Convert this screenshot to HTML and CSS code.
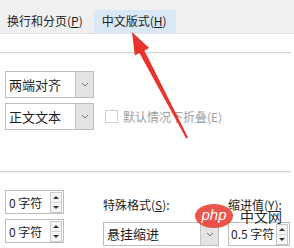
FILE: index.html
```html
<!DOCTYPE html>
<html lang="zh-CN">
<head>
    <meta charset="UTF-8">
    <title>段落</title>
    <link rel="stylesheet" href="styles.css">
</head>
<body>
<div id="wrap">
    <div class="tabs">
        <div class="tab">换行和分页(<u>P</u>)</div>
        <div class="tab active">中文版式(<u>H</u>)</div>
    </div>
    <div class="rule first"></div>

    <div class="general">
        <div class="select w89">
            <span class="val">两端对齐</span>
            <span class="drop"><svg width="8" height="5" viewBox="0 0 8 5"><path d="M1 1 L4 4 L7 1" fill="none" stroke="#777" stroke-width="1"/></svg></span>
        </div>
        <div class="row">
            <div class="select w89">
                <span class="val">正文文本</span>
                <span class="drop"><svg width="8" height="5" viewBox="0 0 8 5"><path d="M1 1 L4 4 L7 1" fill="none" stroke="#777" stroke-width="1"/></svg></span>
            </div>
            <span class="check"></span>
            <span class="muted">默认情况下折叠(E)</span>
        </div>
    </div>

    <div class="rule second"></div>

    <div class="indent">
        <div class="spin w59"><span class="val">0 字符</span><span class="arrows"><i class="up"></i><i class="down"></i></span></div>
        <div class="label">特殊格式(<u>S</u>):</div>
        <div class="label">缩进值(<u>Y</u>):</div>
        <div class="spin w59"><span class="val">0 字符</span><span class="arrows"><i class="up"></i><i class="down"></i></span></div>
        <div class="select w116 low">
            <span class="val">悬挂缩进</span>
            <span class="drop"><svg width="8" height="5" viewBox="0 0 8 5"><path d="M1 1 L4 4 L7 1" fill="none" stroke="#777" stroke-width="1"/></svg></span>
        </div>
        <div class="spin w62 low"><span class="val">0.5 字符</span><span class="arrows"><i class="up"></i><i class="down"></i></span></div>
    </div>

    <!-- 标注箭头 -->
    <svg class="arrow" width="294" height="248" viewBox="0 0 294 248">
        <polygon points="138.6,51.4 143.4,48.6 188,137.6 186.2,138.6" fill="#e8342c"/>
        <polygon points="132,32 134.8,55.6 149.2,48" fill="#e8342c"/>
    </svg>

    <!-- 水印 -->
    <div class="mark">
        <span class="pill">php</span>
        <span class="cn">中文网</span>
    </div>
</div>
</body>
</html>
```
FILE: styles.css
```css
html,body{
    margin: 0;
    padding: 0;
    background: #fff;
}
#wrap{
    position: relative;
    width: 294px;
    height: 248px;
    overflow: hidden;
    font-family: "Noto Sans CJK SC", "Noto Sans", sans-serif;
    font-size: 12px;
    color: #1e1e1e;
}
u{
    text-decoration: underline;
    text-underline-offset: 1px;
}
.tabs{
    height: 33px;
    background: #f0f0f0;
    display: flex;
    align-items: flex-end;
    border-bottom: 1px solid #e2e2e2;
}
.tab{
    height: 23px;
    line-height: 22px;
    padding: 0 8px 0 7px;
}
.tab.active{
    background: #dae7f4;
    padding: 0 9px 0 8px;
    margin-left: 3px;
}
.rule{
    height: 1px;
    background: #d6d6d6;
    margin-right: 3px;
    box-shadow: 0 1px 0 #f2f2f2;
}
.rule.first{
    margin-top: 18px;
}
.rule.second{
    margin-top: 41px;
}
.general{
    padding: 0 0 0 5px;
    margin-top: 18px;
    display: flex;
    flex-direction: column;
    gap: 5px;
}
.row{
    display: flex;
    align-items: center;
}
.select{
    box-sizing: border-box;
    height: 27px;
    border: 1px solid #bdbdbd;
    display: flex;
    background: #fff;
}
.select .val{
    flex: 1;
    line-height: 25px;
    padding-left: 3px;
    font-size: 13px;
    white-space: nowrap;
}
.select .drop{
    width: 17px;
    background: #e3e3e3;
    border-left: 1px solid #c4c4c4;
    display: flex;
    align-items: center;
    justify-content: center;
}
.w89{ width: 89px; }
.w116{ width: 116px; }
.w59{ width: 59px; }
.w62{ width: 62px; }
.check{
    width: 11px;
    height: 11px;
    border: 1px solid #d0d0d0;
    margin-left: 11px;
    margin-right: 5px;
}
.muted{
    color: #a0a0a0;
    font-size: 12px;
}
.indent{
    margin-top: 18px;
    padding-left: 5px;
    display: grid;
    grid-template-columns: 98px 125px 62px;
    grid-template-rows: 24px 25px;
    row-gap: 5px;
}
.label{
    align-self: end;
    line-height: 14px;
    padding-bottom: 2px;
    font-size: 12px;
    white-space: nowrap;
}
.low{
    margin-top: 3px;
    height: 24px;
}
.low .val{ line-height: 22px; }
.spin{
    box-sizing: border-box;
    height: 24px;
    border: 1px solid #bdbdbd;
    display: flex;
    align-items: center;
    padding-right: 1px;
}
.spin .val{
    flex: 1;
    padding-left: 3px;
    font-size: 12px;
    white-space: nowrap;
}
.w62 .val{ padding-left: 2px; }
.arrows{
    width: 10px;
    height: 19px;
    border: 1px solid #c8c8c8;
    display: flex;
    flex-direction: column;
    background: #f6f6f6;
}
.arrows i{
    flex: 1;
    display: flex;
    align-items: center;
    justify-content: center;
}
.arrows i.up{ border-bottom: 1px solid #d4d4d4; }
.arrows i.up::before{
    content: "";
    border-left: 3px solid transparent;
    border-right: 3px solid transparent;
    border-bottom: 3px solid #333;
}
.arrows i.down::before{
    content: "";
    border-left: 3px solid transparent;
    border-right: 3px solid transparent;
    border-top: 3px solid #333;
}
.arrow{
    position: absolute;
    left: 0;
    top: 0;
    pointer-events: none;
}
.mark{
    position: absolute;
    left: 195px;
    top: 204px;
    display: flex;
    align-items: center;
}
.pill{
    width: 38px;
    height: 24px;
    border-radius: 50%;
    background: rgba(232, 62, 52, 0.88);
    color: #fff;
    font-family: "Liberation Sans", sans-serif;
    font-style: italic;
    font-size: 15px;
    line-height: 22px;
    text-align: center;
}
.cn{
    margin-left: 7px;
    margin-top: 0;
    font-size: 14px;
    color: #2a2a2a;
}
```
